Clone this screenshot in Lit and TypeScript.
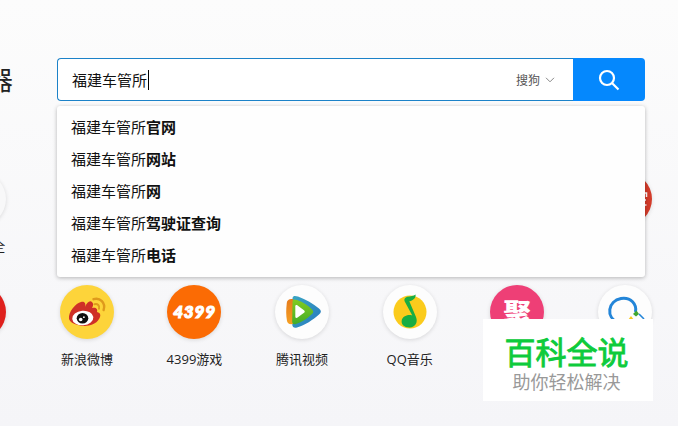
import { LitElement, html, css, svg, nothing } from 'lit';
import { customElement, property, state } from 'lit/decorators.js';

const icons: Record<string, unknown> = {
  weibo: svg`
    <path d="M9 34C8 27 16 18 21 17C25 16 26 19 25 22C27 17 30 15 32 17C34 19 33 21 32 23C36 22 38 24 37 27C41 28 41 31 39 34C35 41 25 42 18 40C13 39 10 37 9 34Z" fill="#cf3027"/>
    <ellipse cx="22.800" cy="33" rx="10.600" ry="7.300" fill="#fff" transform="rotate(-5 22.800 33)"/>
    <ellipse cx="22.500" cy="33.200" rx="5.800" ry="5.200" fill="#111"/>
    <circle cx="20.700" cy="34.500" r="1.800" fill="#fff"/>
    <circle cx="23.900" cy="32.200" r=".9" fill="#fff"/>
    <path d="M33.500 14.200C40 12 46 18 43.600 25" fill="none" stroke="#df9a1c" stroke-width="2.400" stroke-linecap="round"/>
    <path d="M34.500 19.200C37.500 18.300 40 20.500 39 23.700" fill="none" stroke="#df9a1c" stroke-width="2" stroke-linecap="round"/>`,
  video: svg`
    <defs>
      <linearGradient id="vb" x1="0" y1="0" x2="1" y2="1"><stop offset="0" stop-color="#3ba6c4"/><stop offset="1" stop-color="#2678bd"/></linearGradient>
      <linearGradient id="vg" x1="0" y1="0" x2="0" y2="1"><stop offset="0" stop-color="#83cb20"/><stop offset="1" stop-color="#43ad2a"/></linearGradient>
      <linearGradient id="vo" x1="0" y1="0" x2="0" y2="1"><stop offset="0" stop-color="#e67b1c"/><stop offset="1" stop-color="#f5a024"/></linearGradient>
    </defs>
    <path d="M17.500 13C18 10.500 20 10.500 23 11.500C31 14.500 38 18.500 44 23.500C46.500 25.500 46.500 27.500 44 29.500C38 35 30 40 22 42.500C19 43.300 17.500 42 17.300 40Z" fill="url(#vb)"/>
    <path d="M18 14C12.500 14 12 16 11.700 19C11 25 11 30 12 36C12.500 38.500 14 39.500 18 39Z" fill="url(#vo)"/>
    <path d="M17.500 17C17.600 14 19 14 22 15C28 17 33 20.500 37 24.500C38.700 26.200 38.700 27.500 37 29C32.500 33.500 27 37 21 39C18.500 39.800 17.300 39 17.200 36.500Z" fill="url(#vg)"/>
    <path d="M20.300 21.500C20.400 20 21.300 19.700 22.600 20.400L29 25.200C30 26 30 27 29 27.800L22.600 32.600C21.300 33.400 20.400 33 20.300 31.500Z" fill="#fff"/>`,
  music: svg`
    <circle cx="27" cy="27" r="16.500" fill="#fbcb1c"/>
    <path d="M32.600 9.500C32.800 13.500 30 15.500 26.300 16.300L33 32C35.200 37.800 32 42.300 26.800 42.500C21.500 42.700 18 39.500 18.700 35.500C19.400 31.500 24.500 29 29.300 30.500L21.600 16.200C20.800 14 22 12.500 24.300 11.800C27.700 11.200 30.500 11.200 32.600 9.500Z" fill="#18ad43"/>`,
  search: svg`
    <path d="M20.500 38C7 32 10 16 23 13.500C33 12 39 19 37.500 27" fill="none" stroke="#2385d8" stroke-width="3"/>
    <path d="M35 29L38.500 25.500L41 29L38 31.500Z" fill="#42a62f"/>
    <path d="M41 29L46 34" stroke="#2385d8" stroke-width="1.600"/>
    <path d="M30 35L33 31L36 35Z" fill="#f8c91c"/>`,
  red: svg`<path d="M45 21h3.500v4M45 28h3M45 33h3.500" fill="none" stroke="#fff" stroke-width="1.500"/>`,
};

interface Site {
  label?: string;
  kind?: string;
  text?: string;
}

@customElement('site-tile')
export class SiteTile extends LitElement {
  @property() label = '';
  @property() kind = '';
  @property() text = '';

  static styles = css`
    :host {
      display: flex;
      flex-direction: column;
      align-items: center;
      height: 113px;
      gap: 9px;
    }

    .disc {
      display: flex;
      align-items: center;
      justify-content: center;
      width: 54px;
      height: 54px;
      border-radius: 50%;
      background: #fdfdfd;
      box-shadow: 0 1px 4px rgba(0, 0, 0, .13);
      color: #fff;
      flex: none;
    }

    .disc svg {
      display: block;
    }

    .weibo { background: #fdd43a; }
    .plain { background: #f8f8f9; }
    .crimson { background: #df201d; }
    .red { background: #d33b2a; }

    .game {
      background: #fb6b04;
      font: italic 900 17px/54px Lato, sans-serif;
      letter-spacing: .8px;
      -webkit-text-stroke: 1.1px #fff;
    }

    .deal {
      background: #ee3f76;
      font: 900 28px/54px "Noto Sans CJK SC", sans-serif;
    }

    .label {
      font-size: 13px;
      line-height: 22px;
      color: #222;
      white-space: nowrap;
    }

    .label.tail {
      padding-left: 39px;
    }
  `;

  render() {
    const icon = icons[this.kind];
    return html`
      <div class="disc ${this.kind}">
        ${icon ? html`<svg width="54" height="54" viewBox="0 0 54 54">${icon}</svg>` : nothing}
        ${this.text ? html`<span>${this.text}</span>` : nothing}
      </div>
      <div class="label ${this.kind === 'plain' ? 'tail' : ''}">${this.label}</div>
    `;
  }
}

@customElement('app-root')
export class AppRoot extends LitElement {
  @state() query = '福建车管所';
  @state() suggestions = ['官网', '网站', '网', '驾驶证查询', '电话'];

  sites: Site[] = [
    { kind: 'plain', label: '全' },
    {}, {}, {}, {}, {},
    { kind: 'red' },
    { kind: 'crimson' },
    { kind: 'weibo', label: '新浪微博' },
    { kind: 'game', label: '4399游戏', text: '4399' },
    { kind: 'video', label: '腾讯视频' },
    { kind: 'music', label: 'QQ音乐' },
    { kind: 'deal', text: '聚' },
    { kind: 'search' },
  ];

  static styles = css`
    :host {
      display: block;
      position: relative;
      width: 678px;
      height: 426px;
      overflow: hidden;
      background: linear-gradient(#fcfcfc, #f5f5f8);
      font-family: "Open Sans", "Noto Sans CJK SC", sans-serif;
    }

    .top {
      display: flex;
      padding-top: 58px;
      height: 43px;
    }

    .logo {
      width: 57px;
      flex: none;
      text-indent: -13px;
      font-size: 26px;
      line-height: 44px;
      color: #222;
    }

    .search {
      position: relative;
      display: flex;
      width: 588px;
      height: 43px;
    }

    .field {
      box-sizing: border-box;
      flex: 1;
      display: flex;
      align-items: center;
      padding: 0 18px 0 14px;
      border: 1px solid #1c82c8;
      border-right: 0;
      border-radius: 4px 0 0 4px;
      background: #fff;
      color: #111;
      font-size: 15px;
    }

    .caret {
      width: 1px;
      height: 20px;
      margin-left: 1px;
      background: #000;
    }

    .engine {
      margin-left: auto;
      display: flex;
      align-items: center;
      gap: 5px;
      font-size: 12px;
      color: #555;
    }

    .button {
      display: flex;
      align-items: center;
      justify-content: center;
      width: 72px;
      border-radius: 0 4px 4px 0;
      background: #0588fd;
    }

    .suggest {
      position: absolute;
      box-sizing: border-box;
      top: 48px;
      left: 0;
      width: 588px;
      height: 171px;
      padding: 5px 14px;
      border-radius: 3px;
      background: #fefefe;
      box-shadow: 0 1px 4px rgba(0, 0, 0, .28);
      z-index: 1;
    }

    .row {
      font-size: 15px;
      line-height: 32px;
      height: 32px;
      color: #111;
    }

    .sites {
      display: grid;
      grid-template-columns: repeat(7, 107.6px);
      margin: 71px 0 0 -74.5px;
    }

    .mark {
      position: absolute;
      box-sizing: border-box;
      left: 483px;
      top: 319px;
      width: 170px;
      height: 82px;
      padding: 15px 3px 0 0;
      background: #fff;
      text-align: center;
      z-index: 2;
    }

    .title {
      font-size: 31px;
      line-height: 36px;
      color: #0ecb3c;
      -webkit-text-stroke: .9px #0ecb3c;
    }

    .sub {
      font-size: 18px;
      line-height: 24px;
      color: #999;
    }
  `;

  render() {
    return html`
      <div class="top">
        <div class="logo">器</div>
        <div class="search">
          <div class="field">
            <span>${this.query}</span><i class="caret"></i>
            <div class="engine">
              <span>搜狗</span>
              <svg width="10" height="6" viewBox="0 0 10 6"><path d="M1 .8L5 4.800L9 .8" fill="none" stroke="#888"/></svg>
            </div>
          </div>
          <div class="button">
            <svg width="22" height="22" viewBox="0 0 22 22" fill="none" stroke="#fff" stroke-width="2.200">
              <circle cx="9" cy="9" r="7"/>
              <path d="M14 14L20.500 20.500"/>
            </svg>
          </div>
          <div class="suggest">
            ${this.suggestions.map((s) => html`<div class="row">${this.query}<b>${s}</b></div>`)}
          </div>
        </div>
      </div>
      <div class="sites">
        ${this.sites.map((s) => s.kind
          ? html`<site-tile .kind=${s.kind} .label=${s.label ?? ''} .text=${s.text ?? ''}></site-tile>`
          : html`<div></div>`)}
      </div>
      <div class="mark">
        <div class="title">百科全说</div>
        <div class="sub">助你轻松解决</div>
      </div>
    `;
  }
}
